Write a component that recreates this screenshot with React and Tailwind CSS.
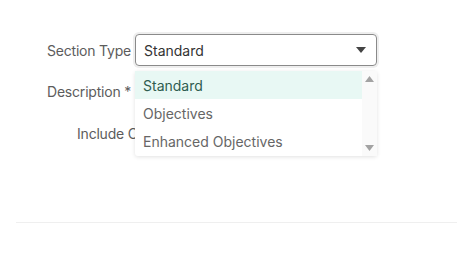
import React from "react";

const options = ["Standard", "Objectives", "Enhanced Objectives"];

const App = () => {
  return (
    <div className="w-[457px] h-[271px] bg-white font-['Inter',sans-serif] overflow-hidden">
      <div className="pt-[34px] pl-[47px]">
        {/* Section Type */}
        <div className="flex items-center h-[32px]">
          <span className="w-[88px] text-[14px] text-[#5c5c5c] tracking-[-0.2px]">Section Type</span>
          <div className="relative">
            <div className="w-[242px] h-[32px] rounded-[4px] border border-[#8a8a8a] ring-2 ring-[#eeeeee] flex items-center justify-between pl-[8px] pr-[10px] text-[14px] text-[#333]">
              <span>Standard</span>
              <svg width="10" height="6" viewBox="0 0 10 6">
                <path d="M0 0h10L5 6z" fill="#444" />
              </svg>
            </div>
            {/* dropdown */}
            <div className="absolute left-0 top-[37px] w-[242px] h-[85px] bg-white rounded-[3px] shadow-[0_1px_4px_rgba(0,0,0,0.12)] flex z-10">
              <div className="flex-1 flex flex-col">
                {options.map((o, i) => (
                  <div
                    key={o}
                    className={
                      i === 0
                        ? "h-[28px] flex items-center pl-[8px] text-[14px] bg-[#e8f8f4] text-[#2f5d50]"
                        : "h-[28px] flex items-center pl-[8px] text-[14px] text-[#666]"
                    }
                  >
                    {o}
                  </div>
                ))}
              </div>
              <div className="w-[15px] bg-[#fafafa] flex flex-col items-center justify-between py-[5px]">
                <svg width="9" height="6" viewBox="0 0 9 6">
                  <path d="M0 6h9L4.5 0z" fill="#a3a3a3" />
                </svg>
                <svg width="9" height="6" viewBox="0 0 9 6">
                  <path d="M0 0h9L4.5 6z" fill="#a3a3a3" />
                </svg>
              </div>
            </div>
          </div>
        </div>

        {/* Description */}
        <div className="flex items-center h-[32px] mt-[9px]">
          <span className="text-[14px] text-[#5c5c5c] tracking-[-0.2px]">Description *</span>
        </div>

        {/* Include */}
        <div className="flex items-center h-[32px] mt-[10px] pl-[30px]">
          <span className="w-[58px] overflow-hidden whitespace-nowrap text-[14px] text-[#5c5c5c] tracking-[-0.2px]">Include Comments</span>
        </div>
      </div>

      <div className="mt-[73px] ml-[16px] border-t border-[#efefef]" />
    </div>
  );
};

export default App;
